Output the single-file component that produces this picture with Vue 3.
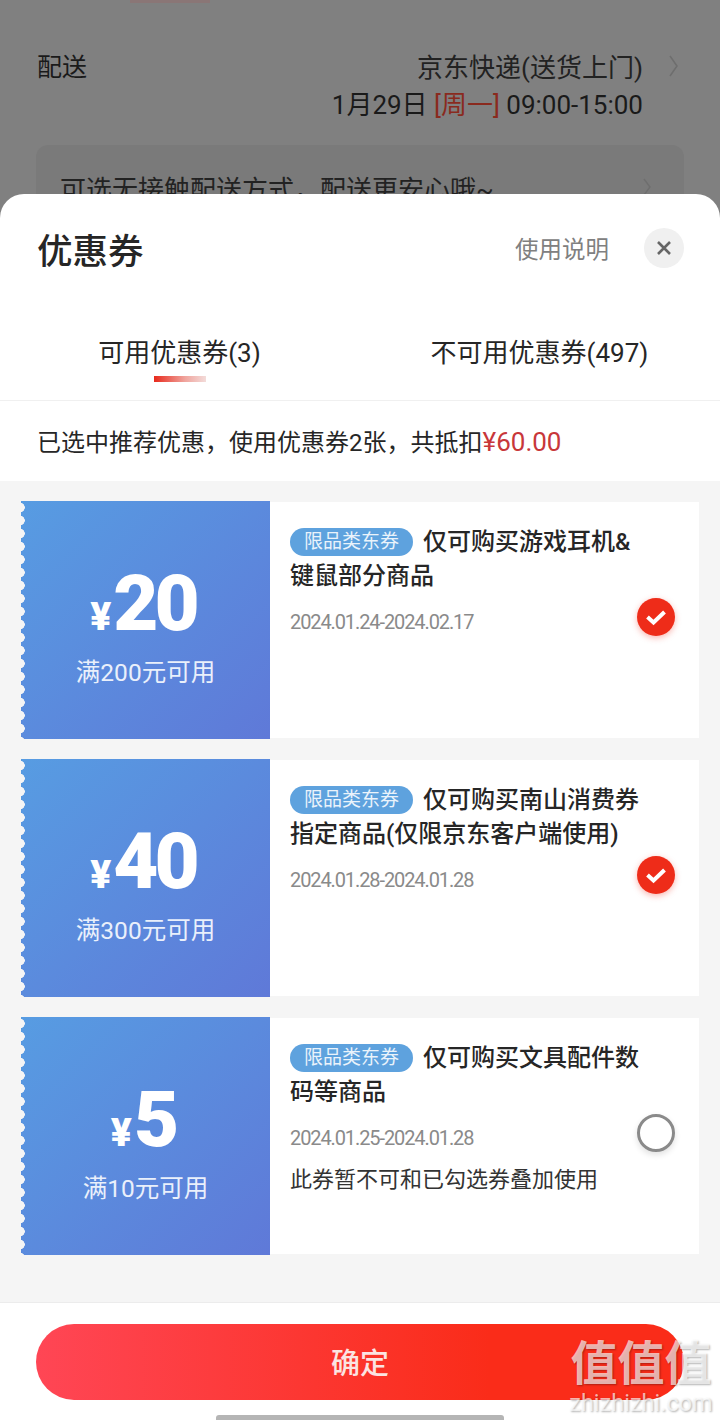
<template>
  <div class="page">
    <div class="behind">
      <div class="top-mark"></div>
      <div class="ship-row">
        <span class="ship-label">配送</span>
        <div class="ship-info">
          <div class="ship-way">京东快递(送货上门)</div>
          <div class="ship-time">1月29日 <em>[周一]</em> 09:00-15:00</div>
        </div>
        <svg class="chev" width="12" height="24" viewBox="0 0 12 24"><path d="M2 2 L9 12 L2 22" fill="none" stroke="#6e6e6e" stroke-width="1.6" /></svg>
      </div>
      <div class="tip-box">
        <span>可选无接触配送方式，配送更安心哦~</span>
        <svg width="10" height="20" viewBox="0 0 10 20"><path d="M2 2 L8 10 L2 18" fill="none" stroke="#6e6e6e" stroke-width="1.4" /></svg>
      </div>
    </div>

    <div class="sheet">
      <div class="sheet-head">
        <h2>优惠券</h2>
        <span class="help">使用说明</span>
        <div class="close">
          <svg width="18" height="18" viewBox="0 0 18 18"><path d="M3 3 L15 15 M15 3 L3 15" stroke="#666" stroke-width="2.6" /></svg>
        </div>
      </div>

      <div class="tabs">
        <div class="tab active">可用优惠券(3)</div>
        <div class="tab">不可用优惠券(497)</div>
      </div>

      <div class="summary">已选中推荐优惠，使用优惠券2张，共抵扣<span>¥60.00</span></div>

      <div class="list">
        <div class="coupon" v-for="item in coupons" :key="item.date">
          <div class="face">
            <div class="amount"><i>¥</i><b>{{ item.amount }}</b></div>
            <div class="limit">{{ item.limit }}</div>
          </div>
          <div class="body">
            <div class="title"><span class="tag">限品类东券</span>{{ item.title }}</div>
            <div class="date">{{ item.date }}</div>
            <div class="note" v-if="item.note">{{ item.note }}</div>
            <div class="check on" v-if="item.checked">
              <svg width="24" height="18" viewBox="0 0 24 18"><path d="M3.5 9 L9.5 14.5 L20.5 4" fill="none" stroke="#fff" stroke-width="4" /></svg>
            </div>
            <div class="check" v-else></div>
          </div>
        </div>
      </div>

      <div class="foot">
        <button class="ok">确定</button>
      </div>
      <div class="home-bar"></div>
    </div>

    <div class="watermark">
      <div class="wm-big">值值值</div>
      <div class="wm-small">zhizhizhi.com</div>
    </div>
  </div>
</template>

<script setup>
const coupons = [
  {
    amount: '20',
    limit: '满200元可用',
    title: '仅可购买游戏耳机&键鼠部分商品',
    date: '2024.01.24-2024.02.17',
    checked: true
  },
  {
    amount: '40',
    limit: '满300元可用',
    title: '仅可购买南山消费券指定商品(仅限京东客户端使用)',
    date: '2024.01.28-2024.01.28',
    checked: true
  },
  {
    amount: '5',
    limit: '满10元可用',
    title: '仅可购买文具配件数码等商品',
    date: '2024.01.25-2024.01.28',
    note: '此券暂不可和已勾选券叠加使用',
    checked: false
  }
];
</script>

<style>
html, body {
  margin: 0;
  padding: 0;
}
</style>

<style scoped>
.page {
  position: relative;
  width: 720px;
  height: 1420px;
  overflow: hidden;
  background: #808080;
  font-family: "Roboto", "Noto Sans CJK SC", sans-serif;
  color: #1a1a1a;
}
.top-mark {
  position: absolute;
  top: 0;
  left: 130px;
  width: 80px;
  height: 3px;
  background: #8a7676;
}
.ship-row {
  display: flex;
  align-items: flex-start;
  padding: 50px 40px 0 37px;
  font-size: 26px;
  line-height: 37px;
}
.ship-label {
  flex: 1;
  font-size: 25px;
  line-height: 36px;
}
.ship-info {
  text-align: right;
}
.ship-way {
  color: #222;
}
.ship-time {
  color: #1a1a1a;
}
.ship-time em {
  font-style: normal;
  color: #8a2a1e;
}
.chev {
  margin: 4px 0 0 25px;
}
.tip-box {
  display: flex;
  justify-content: space-between;
  align-items: center;
  box-sizing: border-box;
  height: 84px;
  margin: 21px 36px 0;
  padding: 0 32px 0 24px;
  border-radius: 12px;
  background: #7a7a7a;
  font-size: 26px;
  color: #222;
}
.sheet {
  position: absolute;
  left: 0;
  right: 0;
  top: 194px;
  bottom: 0;
  display: flex;
  flex-direction: column;
  background: #fff;
  border-radius: 24px 24px 0 0;
}
.sheet-head {
  display: flex;
  align-items: center;
  height: 108px;
  margin-bottom: 2px;
  padding: 0 36px 0 37px;
}
.sheet-head h2 {
  flex: 1;
  margin: 0;
  font-size: 35.5px;
  font-weight: 500;
  color: #262626;
}
.help {
  font-size: 23.5px;
  color: #808080;
  margin-right: 35px;
}
.close {
  display: flex;
  align-items: center;
  justify-content: center;
  width: 40px;
  height: 40px;
  border-radius: 50%;
  background: #f0f0f0;
}
.tabs {
  display: flex;
  height: 96px;
  border-bottom: 1px solid #f0f0f0;
}
.tab {
  position: relative;
  flex: 1;
  padding-top: 30px;
  text-align: center;
  font-size: 26px;
  line-height: 38px;
  color: #262626;
}
.tab:first-child {
  flex: 0 0 359px;
}
.tab.active::after {
  content: "";
  position: absolute;
  left: 154px;
  top: 72px;
  width: 52px;
  height: 6px;
  background: linear-gradient(90deg, #e8291c, #f0a59e 60%, #f3dcda);
}
.summary {
  height: 80px;
  line-height: 82px;
  padding-left: 37px;
  font-size: 24px;
  color: #262626;
}
.summary span {
  color: #c8373a;
  font-size: 26px;
}
.list {
  flex: 1;
  display: flex;
  flex-direction: column;
  gap: 20px;
  padding: 20px 21px 0;
  background: #f5f5f5;
  border-bottom: 1px solid #ececec;
}
.coupon {
  display: flex;
  height: 238px;
}
.face {
  position: relative;
  display: flex;
  flex-direction: column;
  align-items: center;
  flex: 0 0 249px;
  box-sizing: border-box;
  padding-top: 63px;
  color: #fff;
  background: linear-gradient(135deg, #579ce2, #5f79d8);
}
.face::before {
  content: "";
  position: absolute;
  left: -1px;
  top: 0;
  bottom: 0;
  width: 5px;
  background: radial-gradient(circle at 0 50%, #f5f5f5 4.5px, transparent 5px) 0 0 / 5px 13px repeat-y;
}
.amount {
  display: flex;
  align-items: baseline;
  height: 80px;
  line-height: 80px;
}
.amount i {
  font-style: normal;
  font-weight: 900;
  font-size: 39px;
  margin-right: 2px;
}
.amount b {
  font-size: 78px;
  font-weight: 900;
  letter-spacing: -4px;
  margin-right: 5px;
  font-family: "Roboto", sans-serif;
}
.limit {
  margin-top: 14px;
  font-size: 24.5px;
  line-height: 30px;
  color: #eaf0fb;
}
.body {
  position: relative;
  flex: 1;
  margin: 1px 0;
  padding: 23px 54px 0 20px;
  background: #fff;
}
.title {
  font-size: 24px;
  line-height: 34px;
  font-weight: 500;
  color: #262626;
}
.tag {
  display: inline-block;
  height: 28px;
  line-height: 28px;
  padding: 0 14px;
  margin-right: 10px;
  border-radius: 14px;
  background: #5ea2de;
  color: #eaf3fb;
  font-size: 19px;
  font-weight: 400;
  vertical-align: 2px;
}
.date {
  margin-top: 15px;
  font-size: 20px;
  line-height: 28px;
  letter-spacing: -1.1px;
  color: #8a8a8a;
  font-family: "Roboto", sans-serif;
}
.note {
  margin-top: 13px;
  font-size: 22px;
  line-height: 30px;
  color: #333;
}
.check {
  position: absolute;
  right: 24px;
  top: 96px;
  box-sizing: border-box;
  width: 38px;
  height: 38px;
  border-radius: 50%;
  border: 3px solid #8a8a8a;
  box-shadow: 0 3px 6px rgba(0, 0, 0, 0.12);
}
.check.on {
  display: flex;
  align-items: center;
  justify-content: center;
  border: none;
  background: #ee2c19;
  box-shadow: 0 2px 6px rgba(238, 44, 25, 0.35);
}
.foot {
  height: 117px;
  box-sizing: border-box;
  padding: 21px 36px 0;
}
.ok {
  display: block;
  width: 100%;
  height: 76px;
  border: none;
  border-radius: 38px;
  background: linear-gradient(90deg, #ff4655, #fa2c19 70%);
  color: #fbe4e2;
  font-family: "Noto Sans CJK SC", sans-serif;
  font-size: 29px;
  font-weight: 500;
  padding-bottom: 3px;
}
.home-bar {
  position: absolute;
  left: 216px;
  bottom: 0;
  width: 288px;
  height: 5px;
  border-radius: 3px 3px 0 0;
  background: #b5b5b5;
}
.watermark {
  position: absolute;
  left: 568px;
  top: 1334px;
  width: 146px;
  text-align: center;
  color: rgba(255, 255, 255, 0.68);
  text-shadow: 1px 1px 2px rgba(0, 0, 0, 0.3);
  font-family: "Noto Sans CJK SC", sans-serif;
}
.wm-big {
  font-size: 47px;
  line-height: 52px;
  font-weight: 700;
  white-space: nowrap;
}
.wm-small {
  margin-top: 5px;
  font-size: 23.5px;
  line-height: 24px;
  font-family: "Roboto", sans-serif;
  white-space: nowrap;
}
</style>
